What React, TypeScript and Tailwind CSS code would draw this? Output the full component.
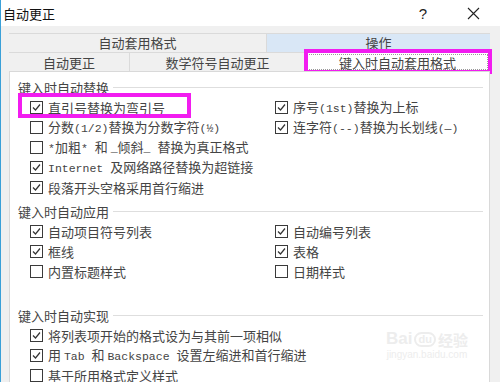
import React from "react";

const M = ({ children }: { children: React.ReactNode }) => (
  <span className="font-['Liberation_Mono',monospace] text-[11.5px]">{children}</span>
);

function Box({ checked }: { checked?: boolean }) {
  return (
    <span className="w-[13px] h-[13px] border border-[#3a3a3a] bg-white flex items-center justify-center shrink-0">
      {checked && (
        <svg width="11" height="11" viewBox="0 0 11 11">
          <path d="M2 5.5 L4.5 8 L9 2.5" stroke="#333" fill="none" strokeWidth="1.2" />
        </svg>
      )}
    </span>
  );
}

function Row({ checked, children, highlight }: { checked?: boolean; children: React.ReactNode; highlight?: boolean }) {
  return (
    <div className="relative flex items-center h-[20px] gap-[5px] whitespace-nowrap">
      <Box checked={checked} />
      <span>{children}</span>
      {highlight && (
        <div className="absolute left-[-12px] top-[-4px] w-[173px] h-[25px] border-[4px] border-[#f21cf0] pointer-events-none" />
      )}
    </div>
  );
}

function Header({ children }: { children: React.ReactNode }) {
  return (
    <div className="flex items-center h-[20px] pl-[8px] pr-[6px]">
      <span className="whitespace-nowrap">{children}</span>
      <div className="flex-1 h-px bg-[#dedede] ml-[4px]" />
    </div>
  );
}

export default function App() {
  return (
    <div className="w-[500px] h-[382px] overflow-hidden border-l border-[#3aa0d8] bg-[#f0f0f0] font-['Noto_Sans_CJK_SC',sans-serif] text-[13px] leading-none text-[#444]">
      {/* title bar */}
      <div className="h-[26px] bg-white flex items-center pl-[2px] text-[#111]">
        <span className="text-[13px]">自动更正</span>
        <div className="flex-1" />
        <span className="text-[15px] mr-[40px] font-['Liberation_Sans',sans-serif] text-[#222]">?</span>
        <svg width="13" height="13" viewBox="0 0 13 13" className="mr-[20px]">
          <path d="M1 1 L12 12 M12 1 L1 12" stroke="#222" strokeWidth="1.1" />
        </svg>
      </div>

      <div className="pt-[7px] pl-[8px]">
        {/* tabs */}
        <div className="w-[481px]">
          <div className="flex h-[19px] border-t border-[#dadada]">
            <div className="w-[258px] flex items-center justify-center border-r border-[#dadada] pb-[2px]">自动套用格式</div>
            <div className="flex-1 flex items-center justify-center bg-[#d9e7f6] pb-[2px]">操作</div>
          </div>
          <div className="flex h-[19px] border-t border-[#dadada]">
            <div className="w-[121px] flex items-center justify-center border-r border-[#dadada]">自动更正</div>
            <div className="w-[175px] flex items-center justify-center">数学符号自动更正</div>
            <div className="relative flex-1 bg-white flex items-center justify-center">
              <div className="absolute inset-x-[2px] top-[1px] bottom-[1px] border border-dotted border-[#999]" />
              <span className="relative">键入时自动套用格式</span>
              <div className="absolute left-[-1px] top-[-4px] w-[188px] h-[25px] border-[4px] border-[#f21cf0]" />
            </div>
          </div>
        </div>

        {/* panel */}
        <div className="relative w-[481px] h-[320px] bg-white border border-[#d9d9d9] pt-[5px]">
          <Header>键入时自动替换</Header>
          <div className="flex">
            <div className="w-[265px] pl-[20px]">
              <Row checked highlight>直引号替换为弯引号</Row>
              <Row>分数<M>(1/2)</M>替换为分数字符<M>(½)</M></Row>
              <Row><M>*</M>加粗<M>* </M>和 <M>_</M>倾斜<M>_ </M>替换为真正格式</Row>
              <Row checked><M>Internet </M>及网络路径替换为超链接</Row>
              <Row checked>段落开头空格采用首行缩进</Row>
            </div>
            <div className="flex-1">
              <Row checked>序号<M>(1st)</M>替换为上标</Row>
              <Row checked>连字符<M>(--)</M>替换为长划线<M>(—)</M></Row>
            </div>
          </div>

          <div className="mt-[4px]">
            <Header>键入时自动应用</Header>
          </div>
          <div className="flex">
            <div className="w-[265px] pl-[20px]">
              <Row checked>自动项目符号列表</Row>
              <Row checked>框线</Row>
              <Row>内置标题样式</Row>
            </div>
            <div className="flex-1">
              <Row checked>自动编号列表</Row>
              <Row checked>表格</Row>
              <Row>日期样式</Row>
            </div>
          </div>

          <div className="mt-[24px]">
            <Header>键入时自动实现</Header>
          </div>
          <div className="pl-[20px]">
            <Row checked>将列表项开始的格式设为与其前一项相似</Row>
            <Row checked>用 <M>Tab </M>和 <M>Backspace </M>设置左缩进和首行缩进</Row>
            <Row>基于所用格式定义样式</Row>
          </div>

          {/* watermark */}
          <div className="absolute left-[376px] top-[258px] flex flex-col items-center text-[#ededed] pointer-events-none">
            <div className="flex items-end gap-[2px] font-['Liberation_Sans',sans-serif] font-bold text-[17px]">
              <span>Bai</span>
              <span className="rounded-full border-2 border-[#ededed] px-[2px] text-[11px]">du</span>
              <span className="font-['Noto_Sans_CJK_SC',sans-serif] text-[15px]">经验</span>
            </div>
            <span className="font-['Liberation_Sans',sans-serif] text-[10px] mt-[3px]">jingyan.baidu.com</span>
          </div>
        </div>
      </div>
    </div>
  );
}
